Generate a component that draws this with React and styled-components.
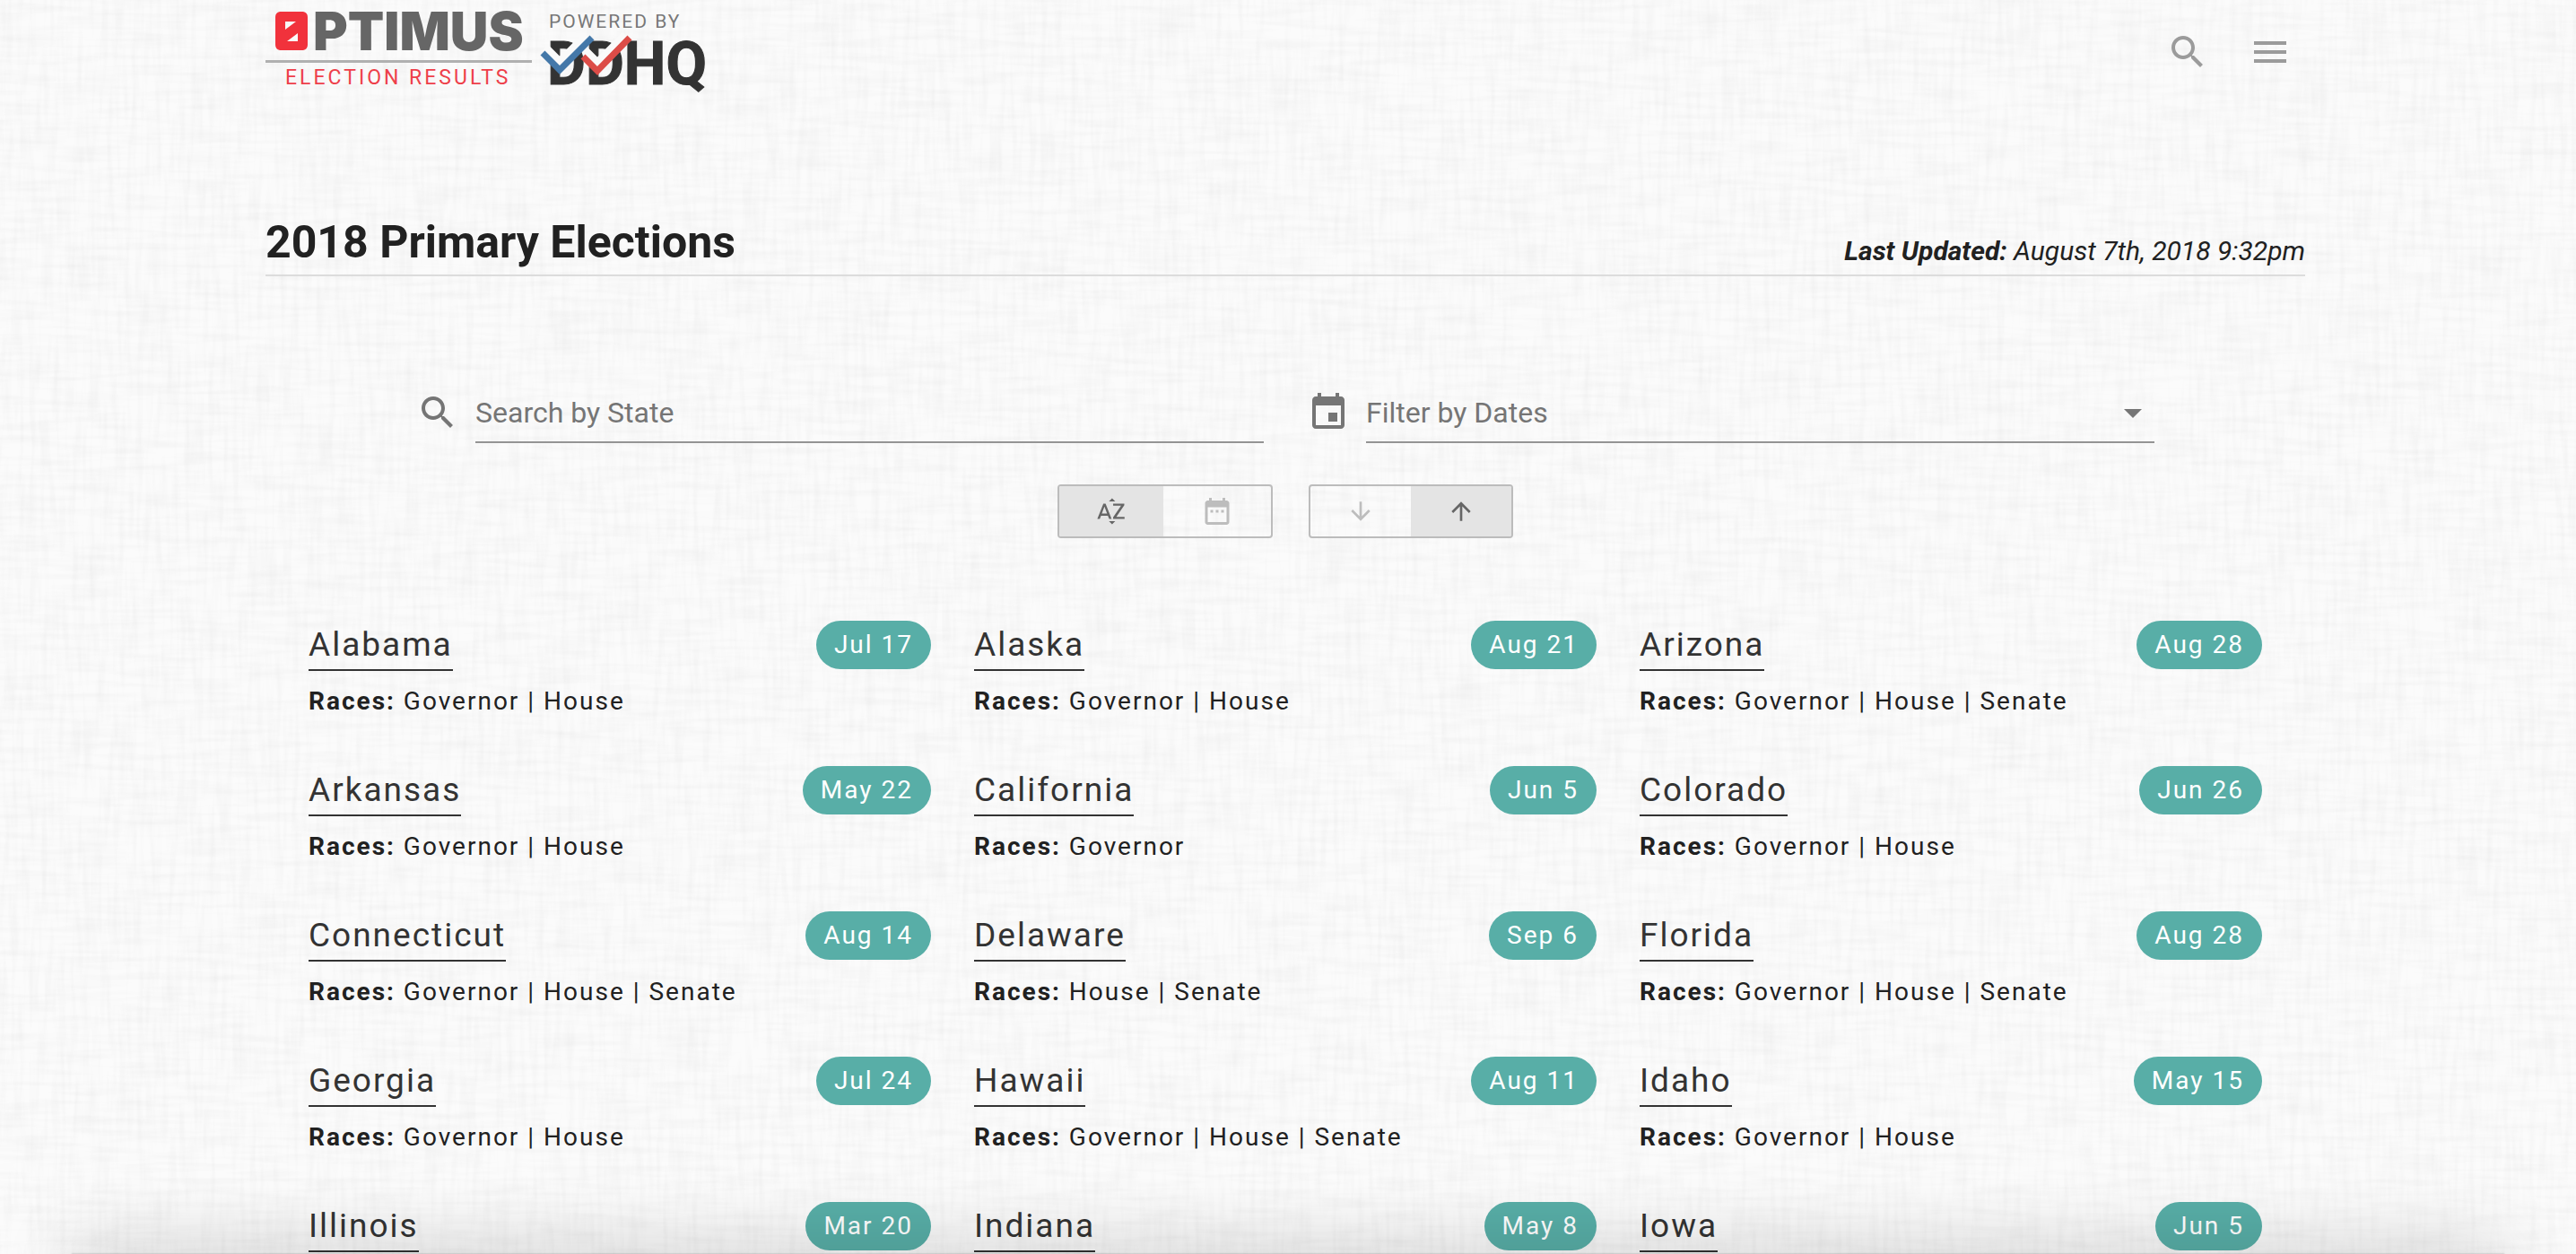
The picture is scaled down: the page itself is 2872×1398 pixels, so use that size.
import React, { useState } from "react";
import styled, { createGlobalStyle } from "styled-components";

const GlobalStyle = createGlobalStyle`
  *, *::before, *::after { box-sizing: border-box; }
  html { background: #fbfbfb; }
  body {
    margin: 0;
    overflow: hidden;
    background: #fbfbfb;
    color: #212121;
    font-family: Roboto, "Liberation Sans", sans-serif;
    -webkit-font-smoothing: antialiased;
  }
`;

const Page = styled.div`
  position: relative;
  height: 100vh;
  overflow: hidden;
  padding: 0 302px 0 296px;
`;

const Texture = styled.svg`
  position: absolute;
  inset: 0;
  width: 100%;
  height: 100%;
  pointer-events: none;
`;

const Content = styled.div`
  position: relative;
`;

const BottomShade = styled.div`
  position: fixed;
  left: 80px;
  right: 80px;
  bottom: -40px;
  height: 40px;
  box-shadow: 0 -4px 80px rgba(0, 0, 0, 0.24), 0 0 2px rgba(0, 0, 0, 0.3);
  pointer-events: none;
`;

const Header = styled.header`
  display: flex;
  align-items: center;
  justify-content: space-between;
  height: 116px;
`;

const LogoLink = styled.a`
  display: block;
  height: 116px;
`;

const Logo = styled.svg`
  display: block;
  width: 500px;
  height: 116px;
`;

const HeaderActions = styled.nav`
  display: flex;
  gap: 44px;
  padding-right: 15px;
`;

const IconButton = styled.button`
  display: flex;
  padding: 0;
  border: 0;
  background: none;
  color: #9b9b9b;
  cursor: pointer;
`;

const Icon = styled.svg`
  display: block;
  flex: none;
  width: ${(p) => p.$size || 48}px;
  height: ${(p) => p.$size || 48}px;
  fill: currentColor;
`;

const TitleBar = styled.div`
  display: flex;
  align-items: flex-end;
  justify-content: space-between;
  margin-top: 124px;
  padding-bottom: 6px;
  border-bottom: 2px solid #dcdcdc;
`;

const Title = styled.h1`
  margin: 0;
  font-size: 50px;
  line-height: 60px;
  font-weight: 700;
`;

const Updated = styled.p`
  margin: 0;
  font-size: 30px;
  line-height: 40px;
  font-style: italic;
`;

const Filters = styled.form`
  display: grid;
  grid-template-columns: 1fr 1fr;
  gap: 48px;
  margin-top: 120px;
  padding: 0 168px;
`;

const Field = styled.div`
  display: flex;
  color: #757575;
`;

const FieldIcon = styled.label`
  display: flex;
  align-items: center;
  width: 66px;
  height: 64px;
`;

const FieldBody = styled.div`
  flex: 1;
  display: flex;
  align-items: center;
  position: relative;
  height: 66px;
  border-bottom: 2px solid #949494;
`;

const fieldText = `
  width: 100%;
  height: 64px;
  padding: 0;
  border: 0;
  outline: 0;
  background: none;
  color: #757575;
  font-family: inherit;
  font-size: 32px;
`;

const TextInput = styled.input`
  ${fieldText}
  &::placeholder { color: #757575; opacity: 1; }
`;

const Select = styled.select`
  ${fieldText}
  appearance: none;
`;

const SelectArrow = styled(Icon)`
  position: absolute;
  right: 0;
  pointer-events: none;
`;

const Toggles = styled.div`
  display: flex;
  justify-content: center;
  gap: 40px;
  margin-top: 46px;
`;

const ToggleGroup = styled.div`
  display: flex;
  height: 60px;
  overflow: hidden;
  border: 2px solid #bcbcbc;
  border-radius: 4px;
`;

const Toggle = styled.button`
  display: flex;
  align-items: center;
  justify-content: center;
  width: ${(p) => p.$width}px;
  padding: 0;
  border: 0;
  background: ${(p) => (p.$on ? "#e4e4e4" : "transparent")};
  color: ${(p) => (p.$on ? "#666" : "#bdbdbd")};
  cursor: pointer;
`;

const StateGrid = styled.ul`
  display: grid;
  grid-template-columns: repeat(3, 1fr);
  column-gap: 48px;
  row-gap: 42px;
  margin: 92px 0 0;
  padding: 0 48px;
  list-style: none;
  letter-spacing: 2px;
`;

const StateItem = styled.li`
  height: 120px;
`;

const StateHead = styled.div`
  display: flex;
  align-items: flex-start;
  justify-content: space-between;
`;

const StateLink = styled.a`
  border-bottom: 2px solid #333;
  color: #333;
  font-size: 37px;
  line-height: 54px;
  text-decoration: none;
`;

const DateBadge = styled.span`
  padding: 0 20px;
  border-radius: 27px;
  background: #58aea7;
  color: #fff;
  font-size: 28px;
  line-height: 54px;
`;

const Races = styled.p`
  margin: 6px 0 0;
  font-size: 28px;
  line-height: 56px;
`;

const states = [
  ["Alabama", "Jul 17", "Governor | House"],
  ["Alaska", "Aug 21", "Governor | House"],
  ["Arizona", "Aug 28", "Governor | House | Senate"],
  ["Arkansas", "May 22", "Governor | House"],
  ["California", "Jun 5", "Governor"],
  ["Colorado", "Jun 26", "Governor | House"],
  ["Connecticut", "Aug 14", "Governor | House | Senate"],
  ["Delaware", "Sep 6", "House | Senate"],
  ["Florida", "Aug 28", "Governor | House | Senate"],
  ["Georgia", "Jul 24", "Governor | House"],
  ["Hawaii", "Aug 11", "Governor | House | Senate"],
  ["Idaho", "May 15", "Governor | House"],
  ["Illinois", "Mar 20", ""],
  ["Indiana", "May 8", ""],
  ["Iowa", "Jun 5", ""],
];

const paths = {
  search:
    "M15.5 14h-.79l-.28-.27C15.41 12.59 16 11.11 16 9.5 16 5.91 13.09 3 9.5 3S3 5.91 3 9.5 5.91 16 9.5 16c1.61 0 3.09-.59 4.23-1.57l.27.28v.79l5 4.99L20.49 19l-4.99-5zm-6 0C7.01 14 5 11.99 5 9.5S7.01 5 9.5 5 14 7.01 14 9.5 11.99 14 9.5 14z",
  menu: "M3 18h18v-2H3v2zm0-5h18v-2H3v2zm0-7v2h18V6H3z",
  event:
    "M17 12h-5v5h5v-5zM16 1v2H8V1H6v2H5c-1.11 0-1.99.9-1.99 2L3 19c0 1.1.89 2 2 2h14c1.1 0 2-.9 2-2V5c0-1.1-.9-2-2-2h-1V1h-2zm3 18H5V8h14v11z",
  dateRange:
    "M9 11H7v2h2v-2zm4 0h-2v2h2v-2zm4 0h-2v2h2v-2zm2-7h-1V2h-2v2H8V2H6v2H5c-1.11 0-1.99.9-1.99 2L3 20c0 1.1.89 2 2 2h14c1.1 0 2-.9 2-2V6c0-1.1-.9-2-2-2zm0 16H5V9h14v11z",
  sortAlpha:
    "M14.94 4.66h-4.72l2.36-2.36zM10.25 19.37h4.66l-2.33 2.33zM6.1 6.27L1.6 17.73h1.84l.92-2.45h5.11l.92 2.45h1.84L7.74 6.27H6.1zm-1.13 7.37l1.94-5.18 1.94 5.18H4.97zM15.73 16.14h6.12v1.59h-8.53v-1.29l5.92-8.56h-5.88v-1.6h8.3v1.26z",
  down: "M20 12l-1.41-1.41L13 16.17V4h-2v12.17l-5.58-5.59L4 12l8 8 8-8z",
  up: "M4 12l1.41 1.41L11 7.83V20h2V7.83l5.58 5.59L20 12l-8-8-8 8z",
  arrow: "M7 10l5 5 5-5z",
};

function Glyph({ name, size }) {
  return (
    <Icon $size={size} viewBox="0 0 24 24" aria-hidden="true">
      <path d={paths[name]} />
    </Icon>
  );
}

function BrandLogo() {
  return (
    <Logo viewBox="0 0 500 116" role="img" aria-label="Optimus Election Results, powered by DDHQ">
      <path
        fill="#f1323c"
        fillRule="evenodd"
        d="M16 13h26q5 1 5 6v31q0 5-5 6H16q-5-1-5-6V19q0-5 5-6zM22 24v9l12-9zM36 37L24 46h12z"
      />
      <text x="53" y="56" fill="#666" fontFamily="Inter, sans-serif" fontWeight="900" fontSize="59">PTIMUS</text>
      <rect x="0" y="67" width="297" height="3" fill="#b0b0b0" />
      <text x="22" y="94" fill="#ee3f4a" fontSize="23" letterSpacing="3">ELECTION RESULTS</text>
      <text x="316" y="31" fill="#777" fontSize="21" letterSpacing="2">POWERED BY</text>
      <text x="314" y="94" fill="#333" stroke="#333" strokeWidth="1" fontWeight="700" fontSize="66">DDHQ</text>
      <path d="M312 53l16 16 30-30" fill="none" stroke="#fafafa" strokeWidth="9" />
      <path d="M356 56l14 14 31-31" fill="none" stroke="#fafafa" strokeWidth="9" />
      <path d="M309 59l19 19 36-36" fill="none" stroke="#4478a9" strokeWidth="7" />
      <path d="M354 63l16 16 36-37" fill="none" stroke="#dc4c47" strokeWidth="7" />
    </Logo>
  );
}

export default function App() {
  const [query, setQuery] = useState("");
  const [sort, setSort] = useState("name");
  const [order, setOrder] = useState("asc");

  return (
    <Page>
      <GlobalStyle />
      <Texture aria-hidden="true">
        <filter id="weft" x="0" y="0" width="100%" height="100%">
          <feTurbulence type="fractalNoise" baseFrequency="0.015 0.15" numOctaves="2" seed="3" />
          <feColorMatrix values="0 0 0 0 0  0 0 0 0 0  0 0 0 0 0  0.05 0 0 0 -0.02" />
        </filter>
        <filter id="warp" x="0" y="0" width="100%" height="100%">
          <feTurbulence type="fractalNoise" baseFrequency="0.15 0.015" numOctaves="2" seed="8" />
          <feColorMatrix values="0 0 0 0 0  0 0 0 0 0  0 0 0 0 0  0.05 0 0 0 -0.02" />
        </filter>
        <rect width="100%" height="100%" filter="url(#weft)" />
        <rect width="100%" height="100%" filter="url(#warp)" />
      </Texture>
      <Content>
        <Header>
          <LogoLink href="#home"><BrandLogo /></LogoLink>
          <HeaderActions>
            <IconButton type="button" aria-label="Search"><Glyph name="search" /></IconButton>
            <IconButton type="button" aria-label="Menu"><Glyph name="menu" /></IconButton>
          </HeaderActions>
        </Header>
        <main>
          <TitleBar>
            <Title>2018 Primary Elections</Title>
            <Updated><b>Last Updated:</b> August 7th, 2018 9:32pm</Updated>
          </TitleBar>
          <Filters onSubmit={(e) => e.preventDefault()}>
            <Field>
              <FieldIcon htmlFor="state" aria-label="Search by State"><Glyph name="search" /></FieldIcon>
              <FieldBody>
                <TextInput id="state" placeholder="Search by State" value={query} onChange={(e) => setQuery(e.target.value)} />
              </FieldBody>
            </Field>
            <Field>
              <FieldIcon htmlFor="dates" aria-label="Filter by Dates"><Glyph name="event" /></FieldIcon>
              <FieldBody>
                <Select id="dates" defaultValue="">
                  <option value="">Filter by Dates</option>
                </Select>
                <SelectArrow viewBox="0 0 24 24" aria-hidden="true"><path d={paths.arrow} /></SelectArrow>
              </FieldBody>
            </Field>
          </Filters>
          <Toggles>
            <ToggleGroup role="group" aria-label="Sort by">
              <Toggle type="button" aria-label="Name" $width={116} $on={sort === "name"} onClick={() => setSort("name")}><Glyph name="sortAlpha" size={36} /></Toggle>
              <Toggle type="button" aria-label="Date" $width={120} $on={sort === "date"} onClick={() => setSort("date")}><Glyph name="dateRange" size={36} /></Toggle>
            </ToggleGroup>
            <ToggleGroup role="group" aria-label="Order">
              <Toggle type="button" aria-label="Descending" $width={112} $on={order === "desc"} onClick={() => setOrder("desc")}><Glyph name="down" size={32} /></Toggle>
              <Toggle type="button" aria-label="Ascending" $width={112} $on={order === "asc"} onClick={() => setOrder("asc")}><Glyph name="up" size={32} /></Toggle>
            </ToggleGroup>
          </Toggles>
          <StateGrid>
            {states
              .filter(([name]) => name.toLowerCase().startsWith(query.toLowerCase()))
              .map(([name, date, races]) => (
                <StateItem key={name}>
                  <StateHead>
                    <StateLink href={"#" + name}>{name}</StateLink>
                    <DateBadge>{date}</DateBadge>
                  </StateHead>
                  {races && <Races><b>Races:</b> {races}</Races>}
                </StateItem>
              ))}
          </StateGrid>
        </main>
      </Content>
      <BottomShade />
    </Page>
  );
}
